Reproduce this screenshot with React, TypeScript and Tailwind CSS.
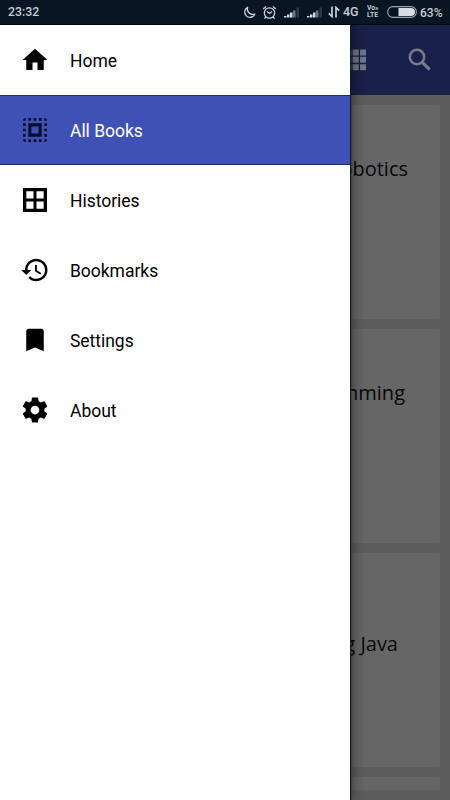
import type { ReactNode } from 'react';

interface MenuItem {
  label: string;
  path: string;
  size: number;
  active?: boolean;
}

const menuItems: MenuItem[] = [
  { label: 'Home', size: 30, path: 'M10 20v-6h4v6h5v-8h3L12 3 2 12h3v8z' },
  {
    label: 'All Books',
    size: 32,
    active: true,
    path: 'M3 5h2V3c-1.100 0-2 .9-2 2zm0 8h2v-2H3v2zm4 8h2v-2H7v2zM3 9h2V7H3v2zm10-6h-2v2h2V3zm6 0v2h2c0-1.100-.9-2-2-2zM5 21v-2H3c0 1.100.9 2 2 2zm-2-4h2v-2H3v2zM9 3H7v2h2V3zm2 18h2v-2h-2v2zm8-8h2v-2h-2v2zm0 8c1.100 0 2-.9 2-2h-2v2zm0-12h2V7h-2v2zm0 8h2v-2h-2v2zm-4 4h2v-2h-2v2zm0-16h2V3h-2v2zM7 17h10V7H7v10zm2.300-7.700h5.400v5.400H9.300V9.300z',
  },
  {
    label: 'Histories',
    size: 32,
    path: 'M3 3v18h18V3H3zm7.900 15.500H5.500v-5.400h5.400v5.400zm0-7.600H5.500V5.500h5.400v5.400zm7.600 7.600h-5.400v-5.400h5.400v5.400zm0-7.600h-5.400V5.500h5.400v5.400z',
  },
  {
    label: 'Bookmarks',
    size: 30,
    path: 'M13 3c-4.970 0-9 4.030-9 9H1l3.890 3.890.07.14L9 12H6c0-3.870 3.130-7 7-7s7 3.130 7 7-3.130 7-7 7c-1.930 0-3.680-.79-4.940-2.060l-1.420 1.420C8.270 19.990 10.510 21 13 21c4.970 0 9-4.030 9-9s-4.030-9-9-9zm-1 5v5l4.280 2.540.72-1.210-3.500-2.080V8H12z',
  },
  {
    label: 'Settings',
    size: 30,
    path: 'M17 3H7c-1.100 0-1.990.9-1.990 2L5 21l7-3 7 3V5c0-1.100-.9-2-2-2z',
  },
  {
    label: 'About',
    size: 30,
    path: 'M19.430 12.980c.04-.32.07-.64.07-.98s-.03-.66-.07-.98l2.110-1.650c.19-.15.24-.42.12-.64l-2-3.460c-.12-.22-.39-.3-.61-.22l-2.490 1c-.52-.4-1.080-.73-1.690-.98l-.38-2.650C14.460 2.180 14.250 2 14 2h-4c-.25 0-.46.18-.49.42l-.38 2.650c-.61.25-1.170.59-1.690.98l-2.490-1c-.23-.09-.49 0-.61.22l-2 3.460c-.13.22-.07.49.12.64l2.110 1.650c-.04.32-.07.65-.07.98s.03.66.07.98l-2.110 1.650c-.19.15-.24.42-.12.64l2 3.460c.12.22.39.3.61.22l2.490-1c.52.4 1.080.73 1.690.98l.38 2.650c.03.24.24.42.49.42h4c.25 0 .46-.18.49-.42l.38-2.650c.61-.25 1.170-.59 1.690-.98l2.490 1c.23.09.49 0 .61-.22l2-3.460c.12-.22.07-.49-.12-.64l-2.110-1.650zM12 15.500c-1.930 0-3.500-1.570-3.500-3.500s1.570-3.500 3.500-3.500 3.500 1.570 3.500 3.500-1.570 3.500-3.500 3.500z',
  },
];

function Signal() {
  return (
    <svg className="ml-[7px]" width="16" height="12" viewBox="0 0 16 12" fill="#d3d9df">
      <path d="M0 10h2.500V11.500H0zM3 8.500h2.500v3H3zM6 6.500h2.500v5H6z" />
      <path d="M9 4.500h2.500v7H9z" opacity=".5" />
      <path d="M12.500 1.500h2.500v10h-2.500z" opacity=".18" />
    </svg>
  );
}

function StatusBar() {
  return (
    <div className="flex h-[25px] shrink-0 items-center border-b border-[#020810] bg-[#081624] pl-2 font-['Roboto',sans-serif] text-[12.5px] font-medium text-[#c3cbd3]">
      <span className="w-[235px] pt-px text-[12.3px]">23:32</span>
      <svg width="13" height="13" viewBox="0 0 13 13" fill="none" stroke="#c8d0d8" strokeWidth="1.300">
        <path d="M4.600 1.300C3.500 5.500 6.500 9.300 11.800 8.200A5.300 5.300 0 1 1 4.600 1.300Z" strokeLinejoin="round" />
      </svg>
      <svg className="ml-1.5" width="15" height="15" viewBox="0 0 15 15" fill="none" stroke="#c8d0d8" strokeWidth="1.300">
        <circle cx="7.500" cy="8" r="5.200" />
        <path d="M1.200 4 4 1.500M13.800 4 11 1.500M3.800 12 2.500 13.700M11.200 12l1.300 1.700M5 6.500l2.500 2 2.500-2" />
      </svg>
      <Signal />
      <Signal />
      <svg className="ml-[5px]" width="12" height="12" viewBox="0 0 12 12" fill="none" stroke="#c8d0d8" strokeWidth="1.700">
        <path d="M4 .5v10L.8 7.300M8 11.500v-10l3.200 3.200" />
      </svg>
      <span className="ml-[3px] w-[17px] pt-px">4G</span>
      <span className="ml-[7px] flex w-[14px] flex-col text-[6.8px] leading-[7px] font-bold">
        <span>Vo»</span>
        <span>LTE</span>
      </span>
      <svg className="ml-[6px]" width="30" height="12" viewBox="0 0 30 12">
        <rect x=".6" y=".6" width="28.800" height="10.800" rx="5.400" fill="none" stroke="#9aa3ac" strokeWidth="1.100" />
        <path d="M11.500 2H24a4 4 0 0 1 0 8H11.500Z" fill="#d8dce2" />
      </svg>
      <span className="ml-[3px] pt-px text-[12px]">63%</span>
    </div>
  );
}

function BookCard({ children, className }: { children?: ReactNode; className: string }) {
  return (
    <div className={`shrink-0 rounded-[2px] bg-[#666666] text-right text-[20px] leading-7 whitespace-nowrap text-[#080808] ${className}`}>
      {children}
    </div>
  );
}

// Library screen, already dimmed by the open drawer
function Library() {
  return (
    <div className="flex h-full flex-col bg-[#5d5d5d] font-['Open_Sans',sans-serif]">
      <div className="flex h-[70px] shrink-0 items-center justify-end bg-[#192049] pr-[17px]">
        <svg className="mr-[39px]" width="24" height="24" viewBox="0 0 24 24" fill="#737687">
          <path d="M1.500 1.500h6v6h-6zM8.700 1.500h6v6h-6zM16 1.500h6v6h-6zM1.500 8.800h6v6h-6zM8.700 8.800h6v6h-6zM16 8.800h6v6h-6zM1.500 16.200h6v6h-6zM8.700 16.200h6v6h-6zM16 16.200h6v6h-6z" />
        </svg>
        <svg width="26" height="26" viewBox="0 0 26 26" fill="none" stroke="#777a8a">
          <circle cx="10" cy="10" r="7.200" strokeWidth="2.600" />
          <path d="m15.300 15.300 7.400 7.400" strokeWidth="3.200" />
        </svg>
      </div>
      <div className="flex min-h-0 flex-1 flex-col gap-2.5 px-2.5 pt-2.5">
        <BookCard className="h-[214px] pt-[50px] pr-8">obotics</BookCard>
        <BookCard className="h-[214px] pt-[50px] pr-[35px]">mming</BookCard>
        <BookCard className="h-[214px] pt-[77px] pr-[42px]">g Java</BookCard>
        <BookCard className="h-[13px]" />
      </div>
    </div>
  );
}

function Drawer() {
  return (
    <nav className="absolute inset-y-0 left-0 flex w-[350px] flex-col bg-white font-['Roboto',sans-serif] shadow-[1px_0_1px_#17191c,2px_0_12px_rgba(0,0,0,0.5)]">
      {menuItems.map((item) => (
        <a
          key={item.label}
          className={
            item.active
              ? 'flex h-[70px] items-center border-y border-[#1d2c7c] bg-[#3f51b5] text-white'
              : 'flex h-[70px] items-center text-black'
          }
        >
          <span className="flex w-[70px] justify-center">
            <svg
              width={item.size}
              height={item.size}
              viewBox="0 0 24 24"
              className={item.active ? 'fill-[#080d2c]' : 'fill-black'}
            >
              <path d={item.path} />
            </svg>
          </span>
          <span className="pt-0.5 text-[17.5px] leading-6 tracking-[-0.03px]">{item.label}</span>
        </a>
      ))}
    </nav>
  );
}

export default function App() {
  return (
    <div className="flex h-[800px] w-[450px] flex-col overflow-hidden">
      <StatusBar />
      <div className="relative min-h-0 flex-1 overflow-hidden">
        <Library />
        <Drawer />
      </div>
    </div>
  );
}
